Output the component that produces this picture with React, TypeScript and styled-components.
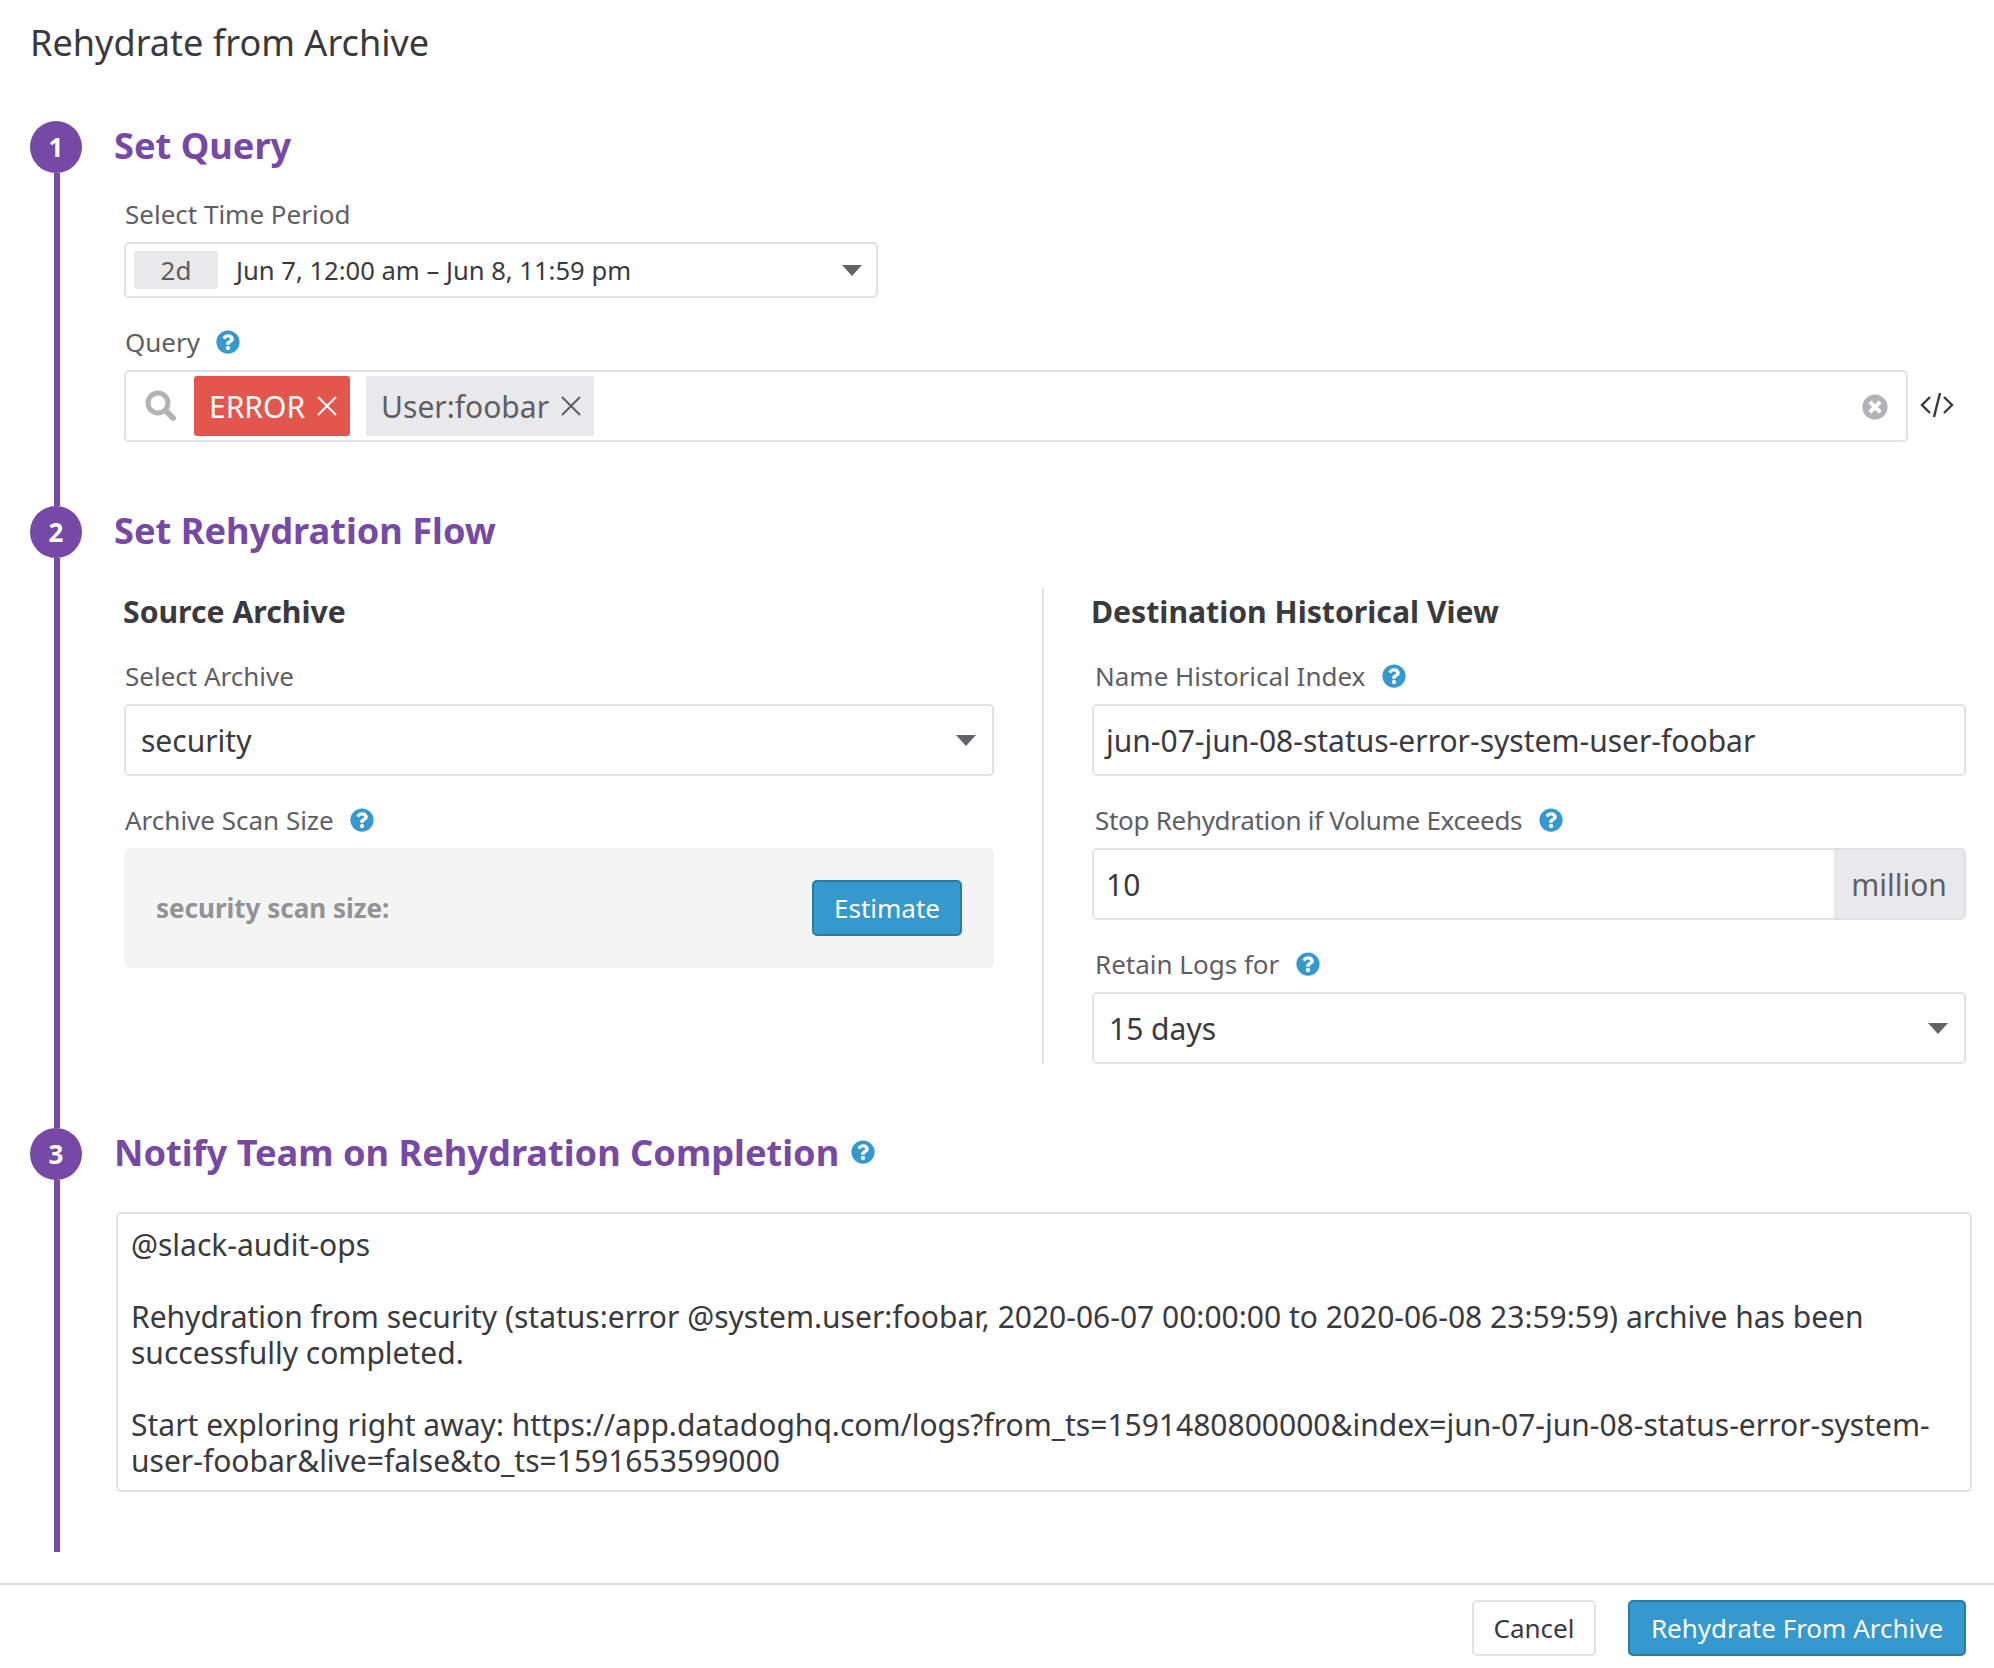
import styled, { createGlobalStyle } from 'styled-components'
import { FaQuestionCircle, FaTimesCircle } from 'react-icons/fa'

const GlobalStyle = createGlobalStyle`
  html, body {
    margin: 0;
    padding: 0;
    background: #fff;
  }
  body {
    font-family: "Noto Sans", "Open Sans", sans-serif;
    color: #3a393e;
  }
`

const Page = styled.div`
  width: 1994px;
  height: 1668px;
  overflow: hidden;
  display: flex;
  flex-direction: column;
`

const Title = styled.h1`
  margin: 0;
  padding: 19px 30px 0;
  height: 121px;
  box-sizing: border-box;
  font-size: 36.1px;
  line-height: 46px;
  font-weight: 400;
  color: #3a393e;
`

const Steps = styled.div`
  display: flex;
  flex-direction: column;
  height: 1431px;
  padding: 0 28px 0 30px;
`

const Step = styled.section<{ $height: number }>`
  display: flex;
  height: ${({ $height }) => $height}px;
  gap: 32px;
`

const Rail = styled.div`
  flex: none;
  width: 52px;
  display: flex;
  flex-direction: column;
  align-items: center;
`

const Circle = styled.div`
  flex: none;
  width: 52px;
  height: 52px;
  border-radius: 50%;
  background: #7749a6;
  color: #fff;
  font-size: 26px;
  font-weight: 700;
  display: flex;
  align-items: center;
  justify-content: center;
`

const Line = styled.div`
  flex: 1;
  width: 6px;
  margin-left: 2px;
  background: #7749a6;
`

const Body = styled.div`
  flex: 1;
  min-width: 0;
`

const Heading = styled.h2`
  margin: 0;
  height: 52px;
  box-sizing: border-box;
  padding-bottom: 4px;
  display: flex;
  align-items: center;
  gap: 12px;
  font-size: 36.2px;
  font-weight: 700;
  color: #7749a6;
`

const Fields = styled.div<{ $top: number }>`
  display: flex;
  flex-direction: column;
  gap: 26px;
  padding: ${({ $top }) => $top}px 0 0 10px;
`

const Field = styled.div`
  display: flex;
  flex-direction: column;
  gap: 10px;
`

const Label = styled.label<{ $tight?: boolean }>`
  height: 36px;
  display: flex;
  align-items: center;
  gap: 16px;
  font-size: 26px;
  color: #5f5e64;
  padding-left: 1px;
  letter-spacing: ${({ $tight }) => ($tight ? '-0.3px' : 'normal')};
`

const DestLabel = styled(Label)`
  padding-left: 3px;
  gap: 17px;
`

const Help = styled(FaQuestionCircle)`
  flex: none;
  width: 24px;
  height: 24px;
  color: #3598cf;
`

const Box = styled.div<{ $height?: number }>`
  box-sizing: border-box;
  height: ${({ $height }) => $height ?? 72}px;
  border: 2px solid #e0e0e6;
  border-radius: 5px;
  background: #fff;
  display: flex;
  align-items: center;
  font-size: 30px;
  color: #3a393e;
`

const Caret = styled.span`
  flex: none;
  margin-left: auto;
  width: 0;
  height: 0;
  border-left: 10px solid transparent;
  border-right: 10px solid transparent;
  border-top: 11px solid #646368;
`

const TimeSelect = styled(Box)`
  width: 754px;
  padding: 0 14px 0 8px;
  font-size: 25.6px;
`

const RangeBadge = styled.span`
  flex: none;
  width: 84px;
  height: 38px;
  margin-right: 18px;
  border-radius: 4px;
  background: #e9e9ec;
  color: #5f5e64;
  font-size: 26px;
  display: flex;
  align-items: center;
  justify-content: center;
`

const QueryRow = styled.div`
  display: flex;
  align-items: center;
`

const QueryBox = styled(Box)`
  width: 1784px;
  padding: 0 18px 0 19px;
`

const SearchIcon = styled.svg`
  flex: none;
  width: 32px;
  height: 32px;
  margin-right: 17px;
  color: #b5b2b7;
`

const Tag = styled.span<{ $error?: boolean }>`
  flex: none;
  height: 60px;
  box-sizing: border-box;
  padding: 0 11px 0 15px;
  margin-right: 16px;
  border-radius: 3px;
  display: flex;
  align-items: center;
  gap: 10px;
  font-size: 30px;
  background: ${({ $error }) => ($error ? '#e2564e' : '#e9e9ec')};
  color: ${({ $error }) => ($error ? '#fff' : '#5f5e64')};
`

const CloseIcon = styled.svg`
  width: 24px;
  height: 24px;
`

const ClearIcon = styled(FaTimesCircle)`
  flex: none;
  width: 26px;
  height: 26px;
  margin: 2px 0 0 auto;
  color: #b5b2b7;
`

const CodeIcon = styled.svg`
  flex: none;
  width: 34px;
  height: 28px;
  margin: -2px 0 0 12px;
  color: #3a393e;
`

const Columns = styled.div`
  display: flex;
  padding: 30px 0 0;
`

const Column = styled.div<{ $left?: boolean }>`
  box-sizing: border-box;
  height: 476px;
  ${({ $left }) =>
    $left
      ? 'flex: none; width: 930px; padding: 0 48px 0 10px; border-right: 2px solid #e0e0e6;'
      : 'flex: 1; min-width: 0; padding-left: 48px;'}
`

const ColumnTitle = styled.h3`
  margin: 0 0 24px -1px;
  height: 46px;
  display: flex;
  align-items: center;
  font-size: 30.2px;
  font-weight: 700;
  color: #3a393e;
`

const ColumnFields = styled.div`
  display: flex;
  flex-direction: column;
  gap: 26px;
`

const SelectBox = styled(Box)`
  padding: 0 16px 0 15px;
`

const InputBox = styled(Box)`
  padding: 0 12px;
`

const ScanPanel = styled.div`
  height: 120px;
  box-sizing: border-box;
  padding: 0 32px;
  border-radius: 5px;
  background: #f4f4f5;
  display: flex;
  align-items: center;
  justify-content: space-between;
`

const ScanText = styled.span`
  font-size: 26px;
  font-weight: 700;
  color: #939297;
`

const Button = styled.button<{ $primary?: boolean; $width: number }>`
  box-sizing: border-box;
  width: ${({ $width }) => $width}px;
  height: 56px;
  padding: 0;
  border-radius: 5px;
  border: 2px solid ${({ $primary }) => ($primary ? '#2a7ba6' : '#e0e0e6')};
  background: ${({ $primary }) => ($primary ? '#3598cf' : '#fff')};
  color: ${({ $primary }) => ($primary ? '#fff' : '#3a393e')};
  font-family: inherit;
  font-size: 26px;
`

const VolumeRow = styled(Box)`
  overflow: hidden;
  padding-left: 12px;
`

const Unit = styled.span`
  flex: none;
  align-self: stretch;
  width: 130px;
  margin-left: auto;
  background: #e9e9ec;
  color: #5f5e64;
  display: flex;
  align-items: center;
  justify-content: center;
`

const Message = styled.div`
  box-sizing: border-box;
  width: 1856px;
  height: 280px;
  margin: 32px 0 0 2px;
  padding: 13px 13px 0;
  border: 2px solid #e0e0e6;
  border-radius: 5px;
  font-size: 30px;
  line-height: 36px;
  color: #3a393e;
  white-space: pre-wrap;
`

const Footer = styled.footer`
  flex: 1;
  box-sizing: border-box;
  margin-top: 31px;
  padding-right: 28px;
  border-top: 2px solid #e0e0e6;
  display: flex;
  align-items: flex-start;
  justify-content: flex-end;
  gap: 32px;
  padding-top: 15px;
`

const Close = () => (
  <CloseIcon viewBox="0 0 24 24" fill="none" stroke="currentColor" strokeWidth="2">
    <path d="M3 3 L21 21 M21 3 L3 21" />
  </CloseIcon>
)

const message = `@slack-audit-ops

Rehydration from security (status:error @system.user:foobar, 2020-06-07 00:00:00 to 2020-06-08 23:59:59) archive has been successfully completed.

Start exploring right away: https://app.datadoghq.com/logs?from_ts=1591480800000&index=jun-07-jun-08-status-error-system-user-foobar&live=false&to_ts=1591653599000`

export default function App() {
  return (
    <Page>
      <GlobalStyle />
      <Title>Rehydrate from Archive</Title>
      <Steps>
        <Step $height={385}>
          <Rail>
            <Circle>1</Circle>
            <Line />
          </Rail>
          <Body>
            <Heading>Set Query</Heading>
            <Fields $top={23}>
              <Field>
                <Label>Select Time Period</Label>
                <TimeSelect $height={56}>
                  <RangeBadge>2d</RangeBadge>
                  Jun 7, 12:00 am – Jun 8, 11:59 pm
                  <Caret />
                </TimeSelect>
              </Field>
              <Field>
                <Label>
                  Query
                  <Help />
                </Label>
                <QueryRow>
                  <QueryBox>
                    <SearchIcon viewBox="0 0 32 32" fill="none" stroke="currentColor">
                      <circle cx="13" cy="13" r="10" strokeWidth="5" />
                      <path d="M21 21 L28 28" strokeWidth="6" strokeLinecap="round" />
                    </SearchIcon>
                    <Tag $error>
                      ERROR
                      <Close />
                    </Tag>
                    <Tag>
                      User:foobar
                      <Close />
                    </Tag>
                    <ClearIcon />
                  </QueryBox>
                  <CodeIcon viewBox="0 0 34 28" fill="none" stroke="currentColor" strokeWidth="2.4">
                    <path d="M10 6 L2 14 L10 22 M24 6 L32 14 L24 22 M20 2 L14 26" />
                  </CodeIcon>
                </QueryRow>
              </Field>
            </Fields>
          </Body>
        </Step>
        <Step $height={622}>
          <Rail>
            <Circle>2</Circle>
            <Line />
          </Rail>
          <Body>
            <Heading>Set Rehydration Flow</Heading>
            <Columns>
              <Column $left>
                <ColumnTitle>Source Archive</ColumnTitle>
                <ColumnFields>
                  <Field>
                    <Label>Select Archive</Label>
                    <SelectBox>
                      security
                      <Caret />
                    </SelectBox>
                  </Field>
                  <Field>
                    <Label>
                      Archive Scan Size
                      <Help />
                    </Label>
                    <ScanPanel>
                      <ScanText>security scan size:</ScanText>
                      <Button $primary $width={150}>
                        Estimate
                      </Button>
                    </ScanPanel>
                  </Field>
                </ColumnFields>
              </Column>
              <Column>
                <ColumnTitle>Destination Historical View</ColumnTitle>
                <ColumnFields>
                  <Field>
                    <DestLabel>
                      Name Historical Index
                      <Help />
                    </DestLabel>
                    <InputBox>jun-07-jun-08-status-error-system-user-foobar</InputBox>
                  </Field>
                  <Field>
                    <DestLabel $tight>
                      Stop Rehydration if Volume Exceeds
                      <Help />
                    </DestLabel>
                    <VolumeRow>
                      10
                      <Unit>million</Unit>
                    </VolumeRow>
                  </Field>
                  <Field>
                    <DestLabel>
                      Retain Logs for
                      <Help />
                    </DestLabel>
                    <SelectBox>
                      15 days
                      <Caret />
                    </SelectBox>
                  </Field>
                </ColumnFields>
              </Column>
            </Columns>
          </Body>
        </Step>
        <Step $height={424}>
          <Rail>
            <Circle>3</Circle>
            <Line />
          </Rail>
          <Body>
            <Heading>
              Notify Team on Rehydration Completion
              <Help />
            </Heading>
            <Message>{message}</Message>
          </Body>
        </Step>
      </Steps>
      <Footer>
        <Button $width={124}>Cancel</Button>
        <Button $primary $width={338}>
          Rehydrate From Archive
        </Button>
      </Footer>
    </Page>
  )
}
